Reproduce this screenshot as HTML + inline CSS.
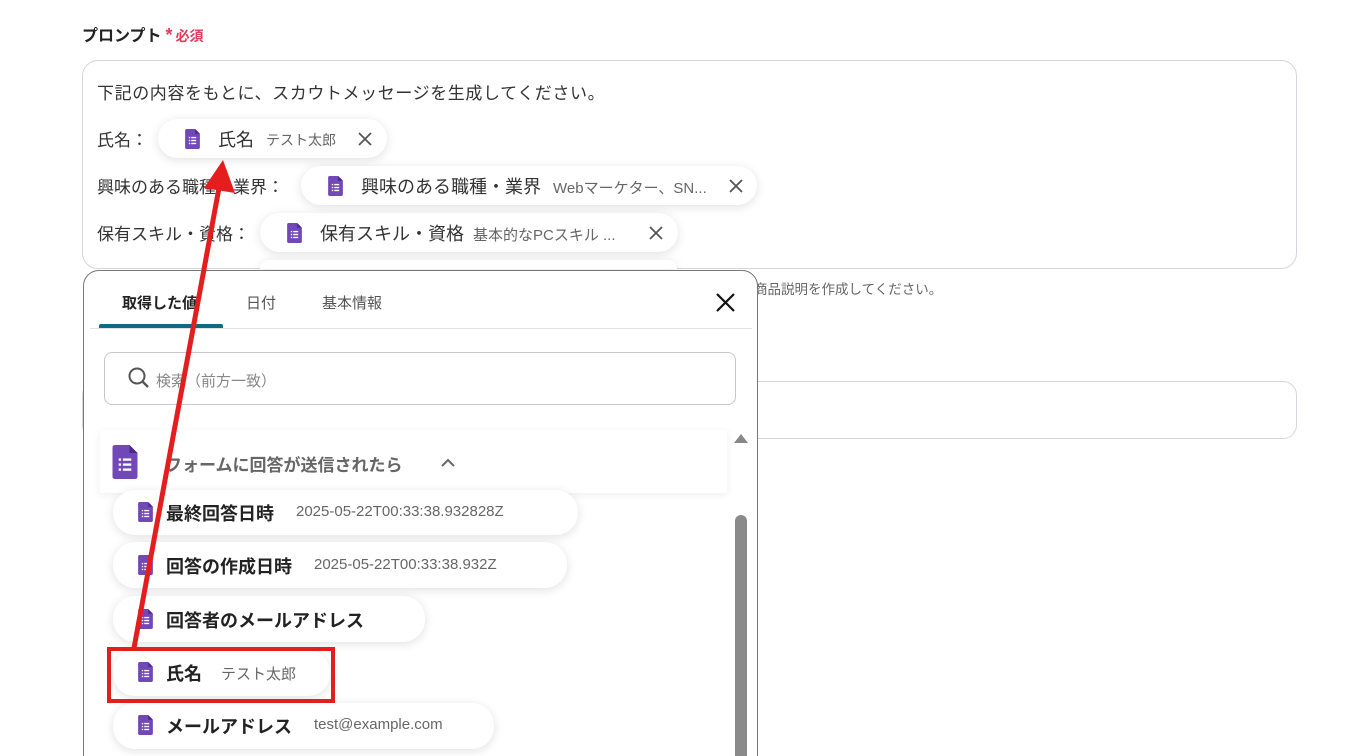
<!DOCTYPE html>
<html><head><meta charset="utf-8"><style>
*{margin:0;padding:0;box-sizing:border-box}
html,body{width:1360px;height:756px;overflow:hidden}
body{background:#fff;position:relative;font-family:"Liberation Sans","Noto Sans CJK JP",sans-serif;color:#333}
.a{position:absolute;white-space:nowrap}
.chip{position:absolute;background:#fff;border-radius:22px;box-shadow:0 2px 10px rgba(0,0,0,.12);height:39px}
.lbl{font-size:17px;color:#333}
.ic{position:absolute}
</style></head><body>
<svg width="0" height="0" style="position:absolute"><defs>
<symbol id="f" viewBox="0 0 14 19"><path d="M1.5 0H9.5L14 4.5V17.5Q14 19 12.5 19H1.5Q0 19 0 17.5V1.5Q0 0 1.5 0Z" fill="#7248b9"/><path d="M9.5 0L14 4.5H9.5Z" fill="#4a2a8a"/><g fill="#fff"><rect x="3.5" y="7.5" width="1.3" height="1.3"/><rect x="5.8" y="7.5" width="4.7" height="1.3"/><rect x="3.5" y="10.3" width="1.3" height="1.3"/><rect x="5.8" y="10.3" width="4.7" height="1.3"/><rect x="3.5" y="13.1" width="1.3" height="1.3"/><rect x="5.8" y="13.1" width="4.7" height="1.3"/></g></symbol>
<symbol id="x" viewBox="0 0 16 16"><path d="M2 2L14 14M14 2L2 14" stroke="#555" stroke-width="1.8"/></symbol>
</defs></svg>

<div class="a" style="left:82px;top:22px;font-size:16px;font-weight:bold;color:#222">プロンプト<span style="color:#e8395b;font-size:18px;margin-left:4px">*</span><span style="color:#e8395b;font-size:14px;margin-left:3px">必須</span></div>

<div class="a" style="left:82px;top:60px;width:1215px;height:209px;border:1px solid #d3d7dd;border-radius:16px"></div>
<div class="a lbl" style="left:97px;top:79px;letter-spacing:0.6px">下記の内容をもとに、スカウトメッセージを生成してください。</div>
<div class="a lbl" style="left:97px;top:126px">氏名：</div>
<div class="chip" style="left:158px;top:119px;width:229px"></div>
<svg class="ic" style="left:185px;top:129px" width="15" height="20"><use href="#f"/></svg>
<div class="a" style="left:218px;top:126px;font-size:18px">氏名</div>
<div class="a" style="left:266px;top:130px;font-size:14px;color:#666">テスト太郎</div>
<svg class="ic" style="left:357px;top:131px" width="16" height="16"><use href="#x"/></svg>

<div class="a lbl" style="left:97px;top:173px">興味のある職種・業界：</div>
<div class="chip" style="left:301px;top:166px;width:456px"></div>
<svg class="ic" style="left:328px;top:176px" width="15" height="20"><use href="#f"/></svg>
<div class="a" style="left:361px;top:173px;font-size:18px">興味のある職種・業界</div>
<div class="a" style="left:553px;top:177px;font-size:15px;color:#666">Webマーケター、SN...</div>
<svg class="ic" style="left:728px;top:178px" width="16" height="16"><use href="#x"/></svg>

<div class="a lbl" style="left:97px;top:220px">保有スキル・資格：</div>
<div class="chip" style="left:260px;top:213px;width:418px"></div>
<svg class="ic" style="left:287px;top:223px" width="15" height="20"><use href="#f"/></svg>
<div class="a" style="left:320px;top:220px;font-size:18px">保有スキル・資格</div>
<div class="a" style="left:473px;top:224px;font-size:15px;color:#666">基本的なPCスキル ...</div>
<svg class="ic" style="left:648px;top:225px" width="16" height="16"><use href="#x"/></svg>
<div class="chip" style="left:260px;top:260px;width:417px;height:9px;border-radius:20px 20px 0 0"></div>

<div class="a" style="left:700px;top:278px;font-size:13.5px;color:#666">作成した商品説明を作成してください。</div>
<div class="a" style="left:82px;top:381px;width:1215px;height:58px;border:1px solid #d3d7dd;border-radius:14px"></div>

<!-- popup -->
<div class="a" style="left:83px;top:270px;width:675px;height:500px;background:#fff;border:1px solid #777;border-radius:16px 16px 0 0"></div>
<div class="a" style="left:122px;top:292px;font-size:15px;font-weight:bold;color:#222">取得した値</div>
<div class="a" style="left:246px;top:292px;font-size:15px;color:#555">日付</div>
<div class="a" style="left:322px;top:292px;font-size:15px;color:#555">基本情報</div>
<div class="a" style="left:99px;top:324px;width:124px;height:4px;background:#0e6b82;border-radius:2px 2px 0 0"></div>
<div class="a" style="left:90px;top:328px;width:662px;height:1px;background:#e3e3e3"></div>
<svg class="ic" style="left:715px;top:292px" width="21" height="21"><path d="M2 2L19 19M19 2L2 19" stroke="#111" stroke-width="2.2"/></svg>
<div class="a" style="left:104px;top:352px;width:632px;height:53px;border:1px solid #c8c8c8;border-radius:8px"></div>
<svg class="ic" style="left:127px;top:366px" width="24" height="24"><circle cx="10" cy="10" r="7.5" fill="none" stroke="#555" stroke-width="2"/><path d="M15.5 15.5L21 21" stroke="#555" stroke-width="2.4"/></svg>
<div class="a" style="left:156px;top:370px;font-size:15px;color:#888">検索（前方一致）</div>

<div class="a" style="left:100px;top:430px;width:627px;height:63px;background:#fff;box-shadow:0 2px 8px rgba(0,0,0,.07)"></div>
<svg class="ic" style="left:112px;top:445px" width="26" height="34" viewBox="0 0 14 19"><use href="#f"/></svg>
<div class="a" style="left:165px;top:451px;font-size:17px;color:#666;font-weight:bold">フォームに回答が送信されたら</div>
<svg class="ic" style="left:440px;top:456px" width="16" height="12"><path d="M2 10L8 4L14 10" fill="none" stroke="#666" stroke-width="2"/></svg>
<svg class="ic" style="left:733px;top:432px" width="16" height="12"><path d="M1 11L8 2L15 11Z" fill="#888"/></svg>
<div class="a" style="left:735px;top:515px;width:12px;height:260px;background:#8a8a8a;border-radius:6px"></div>

<div class="chip" style="left:113px;top:490px;width:465px;height:45px"></div>
<svg class="ic" style="left:138px;top:502px" width="15" height="20"><use href="#f"/></svg>
<div class="a" style="left:166px;top:500px;font-size:18px;font-weight:bold;color:#222">最終回答日時</div>
<div class="a" style="left:296px;top:503px;font-size:15px;color:#666">2025-05-22T00:33:38.932828Z</div>

<div class="chip" style="left:113px;top:542px;width:454px;height:46px"></div>
<svg class="ic" style="left:138px;top:555px" width="15" height="20"><use href="#f"/></svg>
<div class="a" style="left:166px;top:553px;font-size:18px;font-weight:bold;color:#222">回答の作成日時</div>
<div class="a" style="left:314px;top:556px;font-size:15px;color:#666">2025-05-22T00:33:38.932Z</div>

<div class="chip" style="left:113px;top:596px;width:312px;height:46px"></div>
<svg class="ic" style="left:138px;top:609px" width="15" height="20"><use href="#f"/></svg>
<div class="a" style="left:166px;top:607px;font-size:18px;font-weight:bold;color:#222">回答者のメールアドレス</div>

<div class="chip" style="left:113px;top:650px;width:217px;height:46px"></div>
<svg class="ic" style="left:138px;top:662px" width="15" height="20"><use href="#f"/></svg>
<div class="a" style="left:166px;top:660px;font-size:18px;font-weight:bold;color:#222">氏名</div>
<div class="a" style="left:221px;top:663px;font-size:15px;color:#666">テスト太郎</div>

<div class="chip" style="left:113px;top:703px;width:381px;height:46px"></div>
<svg class="ic" style="left:138px;top:715px" width="15" height="20"><use href="#f"/></svg>
<div class="a" style="left:166px;top:713px;font-size:18px;font-weight:bold;color:#222">メールアドレス</div>
<div class="a" style="left:314px;top:716px;font-size:15px;color:#666">test@example.com</div>

<div class="a" style="left:107px;top:647px;width:228px;height:56px;border:4px solid #e02020"></div>

<svg class="a" style="left:0;top:0" width="1360" height="756"><path d="M134 648L219 188" stroke="#e41e1e" stroke-width="5"/><path d="M223 160L204 188L235 193Z" fill="#e41e1e"/></svg>
</body></html>
